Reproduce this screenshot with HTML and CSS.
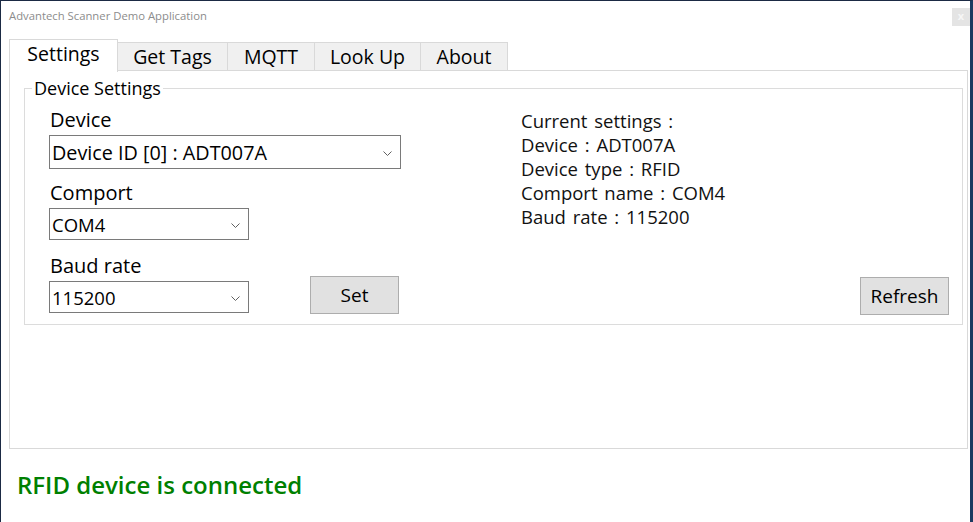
FILE: index.html
```html
<!DOCTYPE html>
<html>
<head>
<meta charset="utf-8">
<link rel="stylesheet" href="styles.css">
</head>
<body>
<div class="window">
  <div class="titlebar">
    <span class="title">Advantech Scanner Demo Application</span>
    <span class="close">x</span>
  </div>
  <div class="tabs">
    <div class="tab active w-settings">Settings</div>
    <div class="tab w-gettags">Get Tags</div>
    <div class="tab w-mqtt">MQTT</div>
    <div class="tab w-lookup">Look Up</div>
    <div class="tab w-about">About</div>
  </div>
  <div class="panel">
    <div class="group">
      <span class="legend">Device Settings</span>
      <div class="left">
        <div class="label first">Device</div>
        <div class="select big">
          <span>Device ID [0] : ADT007A</span>
          <svg class="chev" width="9" height="5" viewBox="0 0 9 5"><polyline points="0.5,0.5 4.5,4.5 8.5,0.5" fill="none" stroke="#606060" stroke-width="1"/></svg>
        </div>
        <div class="label second">Comport</div>
        <div class="select small">
          <span>COM4</span>
          <svg class="chev" width="9" height="5" viewBox="0 0 9 5"><polyline points="0.5,0.5 4.5,4.5 8.5,0.5" fill="none" stroke="#606060" stroke-width="1"/></svg>
        </div>
        <div class="label third">Baud rate</div>
        <div class="baudrow">
          <div class="select small">
            <span>115200</span>
            <svg class="chev" width="9" height="5" viewBox="0 0 9 5"><polyline points="0.5,0.5 4.5,4.5 8.5,0.5" fill="none" stroke="#606060" stroke-width="1"/></svg>
          </div>
          <button class="btn set">Set</button>
        </div>
      </div>
      <div class="right">
        <div class="info">
          <div>Current settings :</div>
          <div>Device : ADT007A</div>
          <div>Device type : RFID</div>
          <div>Comport name : COM4</div>
          <div>Baud rate : 115200</div>
        </div>
        <button class="btn refresh">Refresh</button>
      </div>
    </div>
  </div>
  <div class="status">RFID device is connected</div>
</div>
</body>
</html>
```

FILE: styles.css
```css
html, body {
  margin: 0;
  padding: 0;
  background: #ffffff;
}
body {
  font-family: "Open Sans", "Noto Sans", sans-serif;
  color: #000;
}
.window {
  width: 969px;
  height: 521px;
  border-top: 1px solid #1b2a44;
  border-left: 1px solid #1b2a44;
  border-right: 3px solid #1b3a60;
  background: #fff;
  display: flex;
  flex-direction: column;
}
.titlebar {
  height: 38px;
  display: flex;
  align-items: flex-start;
  justify-content: space-between;
  padding-left: 8px;
  box-sizing: border-box;
}
.title {
  font-size: 11.3px;
  color: #8c8c8c;
  margin-top: 7px;
}
.close {
  width: 18px;
  height: 18px;
  margin-top: 7px;
  background: #e4e4e4;
  color: #f6f6f6;
  font-size: 11px;
  font-weight: bold;
  line-height: 16px;
  text-align: center;
}
.tabs {
  display: flex;
  align-items: flex-end;
  height: 31px;
  padding-left: 8px;
  position: relative;
  z-index: 1;
}
.tab {
  height: 28px;
  box-sizing: border-box;
  background: #f0f0f0;
  border-top: 1px solid #d9d9d9;
  border-right: 1px solid #d9d9d9;
  font-size: 19.5px;
  line-height: 27px;
  text-align: center;
}
.tab.active {
  height: 33px;
  background: #fff;
  border-left: 1px solid #d9d9d9;
  margin-bottom: -2px;
  line-height: 28px;
}
.w-settings { width: 109px; }
.w-gettags { width: 110px; }
.w-mqtt { width: 87px; }
.w-lookup { width: 106px; }
.w-about { width: 87px; }
.panel {
  margin-left: 8px;
  width: 959px;
  height: 379px;
  box-sizing: border-box;
  border: 1px solid #d9d9d9;
  background: #fff;
  padding: 17px 4px 0 14px;
}
.group {
  position: relative;
  border: 1px solid #dcdcdc;
  height: 237px;
  box-sizing: border-box;
  display: flex;
  padding: 18px 13px 0 24px;
}
.legend {
  position: absolute;
  top: -13px;
  left: 7px;
  background: #fff;
  padding: 0 2px;
  font-size: 18px;
  line-height: 24px;
}
.left {
  width: 352px;
  display: flex;
  flex-direction: column;
}
.label {
  font-size: 20px;
  line-height: 26px;
  padding-left: 1px;
}
.label.second { margin-top: 11px; }
.label.third { margin-top: 13px; }
.select {
  box-sizing: border-box;
  border: 1px solid #7a7a7a;
  background: #fff;
  display: flex;
  align-items: center;
  justify-content: space-between;
  padding: 0 8px 0 2px;
  margin-top: 2px;
}
.select.big {
  width: 352px;
  height: 34px;
  font-size: 19.8px;
}
.select.small {
  width: 200px;
  height: 32px;
  font-size: 18.5px;
}
.chev { flex: none; margin-top: 2px; }
.baudrow {
  display: flex;
  align-items: flex-start;
  gap: 61px;
}
.btn {
  box-sizing: border-box;
  width: 89px;
  height: 38px;
  background: #e1e1e1;
  border: 1px solid #adadad;
  font-family: "Open Sans", "Noto Sans", sans-serif;
  font-size: 19px;
  color: #000;
  padding: 0;
  margin: 0;
}
.btn.set { margin-top: -3px; }
.right {
  flex: 1;
  display: flex;
  flex-direction: column;
  justify-content: space-between;
  align-items: flex-start;
  padding-left: 120px;
  padding-bottom: 9px;
}
.info {
  font-size: 18.5px;
  line-height: 24px;
  word-spacing: 2px;
  color: #111;
  margin-top: 2px;
}
.btn.refresh {
  align-self: flex-end;
}
.status {
  padding-left: 16px;
  margin-top: 19px;
  font-size: 24px;
  line-height: 34px;
  color: #008000;
  font-weight: 600;
}
```
